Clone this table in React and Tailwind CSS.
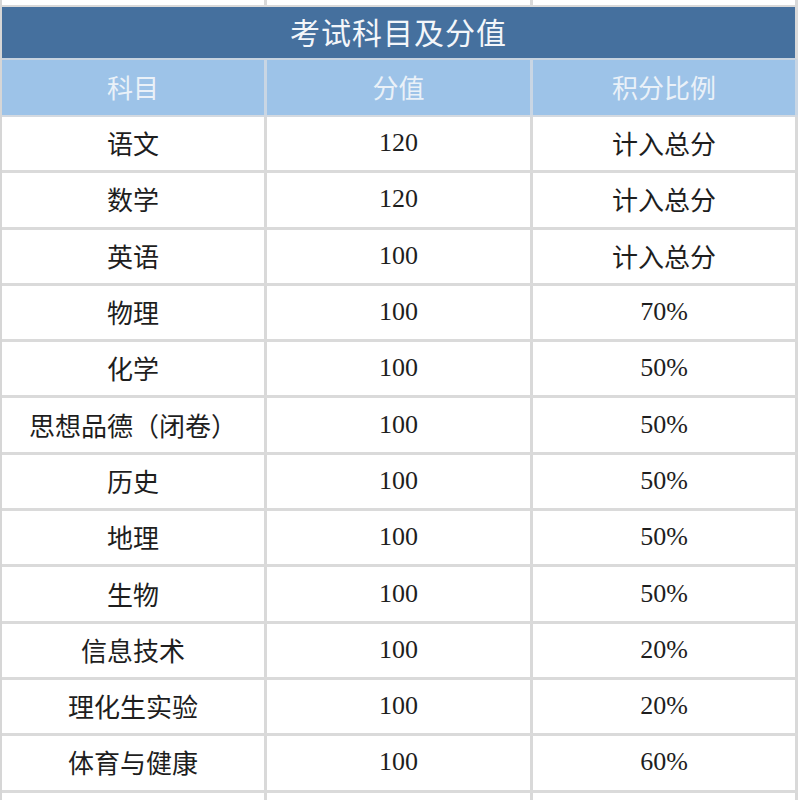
const rows = [
  ["语文", "120", "计入总分"],
  ["数学", "120", "计入总分"],
  ["英语", "100", "计入总分"],
  ["物理", "100", "70%"],
  ["化学", "100", "50%"],
  ["思想品德（闭卷）", "100", "50%"],
  ["历史", "100", "50%"],
  ["地理", "100", "50%"],
  ["生物", "100", "50%"],
  ["信息技术", "100", "20%"],
  ["理化生实验", "100", "20%"],
  ["体育与健康", "100", "60%"],
];

const cjk = "font-['Noto_Sans_CJK_SC','Noto_Sans',sans-serif]";

function Cell({ children, className = "" }) {
  return (
    <div className={`flex items-center justify-center border-r-[3px] border-[#d9d9d9] pb-[2px] ${className}`}>
      {children}
    </div>
  );
}

function Value({ text }) {
  const isNumber = /^[0-9%]+$/.test(text);
  return (
    <span
      className={
        isNumber
          ? "font-['Liberation_Serif',serif] text-[26px] text-[#1e1e1e]"
          : `${cjk} text-[26px] text-[#1e1e1e]`
      }
    >
      {text}
    </span>
  );
}

export default function App() {
  return (
    <div className="h-[800px] w-[800px] overflow-hidden bg-white">
      <div className="w-[798px] border-l-2 border-[#d6d6d6]">
        {/* row above the table, cut off */}
        <div className="grid h-[5px] grid-cols-[265px_266px_265px]">
          <Cell />
          <Cell />
          <Cell />
        </div>

        <div
          className={`flex h-[55px] items-center justify-center border-y-2 border-r-[3px] border-t-[#d9d9d9] border-b-[#c7d3e0] border-r-[#d9d9d9] bg-[#45709e] pb-[2px] ${cjk} text-[30px] tracking-[1px] text-[#f3f6fa]`}
        >
          考试科目及分值
        </div>

        <div className="grid h-[57px] grid-cols-[265px_266px_265px] border-b-2 border-[#d3d9e0] bg-[#9dc3e8]">
          {["科目", "分值", "积分比例"].map((h) => (
            <div
              key={h}
              className={`flex items-center justify-center border-r-[3px] border-[#c9d6e4] pb-[2px] ${cjk} text-[26px] text-[#eaf1f8]`}
            >
              {h}
            </div>
          ))}
        </div>

        {rows.map(([name, score, ratio]) => (
          <div
            key={name}
            className="grid h-[56.3px] grid-cols-[265px_266px_265px] border-b-[3px] border-[#dadada]"
          >
            <Cell>
              <span className={`${cjk} text-[26px] text-[#1e1e1e]`}>{name}</span>
            </Cell>
            <Cell>
              <Value text={score} />
            </Cell>
            <Cell>
              <Value text={ratio} />
            </Cell>
          </div>
        ))}

        <div className="grid h-[40px] grid-cols-[265px_266px_265px]">
          <Cell />
          <Cell />
          <Cell />
        </div>
      </div>
    </div>
  );
}
